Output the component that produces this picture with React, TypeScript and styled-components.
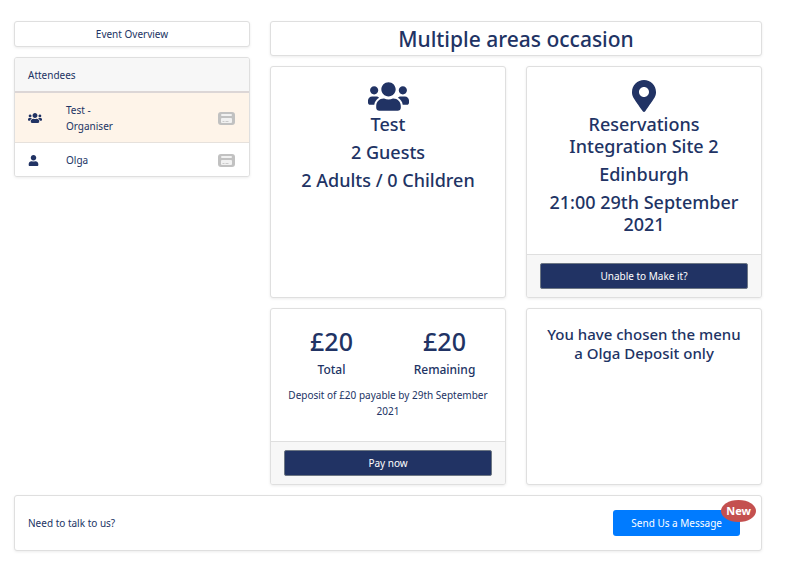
import React from 'react';
import styled, { createGlobalStyle, css } from 'styled-components';
import { FaMapMarkerAlt, FaUser, FaUsers } from 'react-icons/fa';

const navy = '#213364';
const line = '#dfdfdf';

const GlobalStyle = createGlobalStyle`
  *, *::before, *::after { box-sizing: border-box; }
  body {
    margin: 0;
    background: #fff;
    color: ${navy};
    font-family: "Noto Sans", "Open Sans", sans-serif;
    font-size: 10px;
    line-height: 16px;
  }
  h1, h2, h3, p { margin: 0; }
  button { font: inherit; cursor: pointer; }
`;

const Page = styled.main`
  display: flex;
  flex-direction: column;
  gap: 10px;
  padding: 21px 25px 21px 14px;
`;

const Columns = styled.div`
  display: grid;
  grid-template-columns: repeat(3, minmax(0, 1fr));
  column-gap: 20px;
`;

const Sidebar = styled.aside`
  display: flex;
  flex-direction: column;
  gap: 10px;
`;

const Content = styled.section`
  grid-column: span 2;
  display: grid;
  grid-template-columns: repeat(2, minmax(0, 1fr));
  gap: 10px 20px;
`;

const panel = css`
  background: #fff;
  border: 1px solid ${line};
  border-radius: 3px;
  box-shadow: 0 1px 3px rgba(0, 0, 0, 0.08);
`;

const OverviewButton = styled.button`
  ${panel}
  padding: 4px 14px;
  color: ${navy};
`;

const Attendees = styled.div`
  ${panel}
  overflow: hidden;
`;

const AttendeesHeader = styled.h2`
  padding: 9px 13px 8px;
  background: #f7f7f7;
  border-bottom: 2px solid #dcd6d6;
  font-size: 10px;
  font-weight: 400;
  line-height: 16px;
`;

const AttendeeRow = styled.div<{ $active?: boolean }>`
  display: grid;
  grid-template-columns: 38px 64px 1fr;
  align-items: center;
  padding: 9px 14px 8px 13px;
  background: ${(p) => (p.$active ? '#fef4e9' : '#fff')};
  & + & { border-top: 1px solid #e6e1dc; }
  svg { display: block; }
  > :last-child { justify-self: end; }
`;

const TitleBar = styled.header`
  ${panel}
  grid-column: 1 / -1;
  padding: 5px 14px 3px;
  text-align: center;
`;

const Title = styled.h1`
  font-size: 21px;
  font-weight: 500;
  line-height: 25px;
`;

const Card = styled.article`
  ${panel}
  display: flex;
  flex-direction: column;
  overflow: hidden;
  text-align: center;
`;

const CardBody = styled.div<{ $tall?: boolean }>`
  flex: 1;
  display: flex;
  flex-direction: column;
  align-items: center;
  padding: ${(p) => (p.$tall ? '13px 14px' : '16px 14px 22px')};
`;

const CardFooter = styled.footer`
  padding: 8px 13px;
  background: #f7f7f7;
  border-top: 1px solid ${line};
`;

const IconSlot = styled.div`
  display: flex;
  align-items: center;
  height: 32px;
  margin-bottom: 1px;
`;

const Heading = styled.h2`
  margin-bottom: 6px;
  font-size: 18px;
  font-weight: 500;
  line-height: 22px;
`;

const MenuHeading = styled.h2`
  padding: 0 4px;
  font-size: 15px;
  font-weight: 500;
  line-height: 19px;
`;

const Amounts = styled.div`
  align-self: stretch;
  display: grid;
  grid-template-columns: 1fr 1fr;
  column-gap: 20px;
  margin-bottom: 9px;
`;

const Amount = styled.p`
  font-size: 25px;
  font-weight: 500;
  line-height: 32px;
`;

const AmountLabel = styled.h3`
  padding-top: 5px;
  font-size: 12px;
  font-weight: 500;
  line-height: 16px;
`;

const PrimaryButton = styled.button`
  display: block;
  width: 100%;
  padding: 4px 14px;
  background: ${navy};
  border: 1px solid #6d7784;
  border-radius: 2px;
  color: #fff;
`;

const ContactBar = styled.section`
  ${panel}
  display: flex;
  align-items: center;
  justify-content: space-between;
  padding: 14px 21px 14px 13px;
`;

const MessageButton = styled.button`
  position: relative;
  padding: 5px 18px;
  background: #007bff;
  border: 0;
  border-radius: 3px;
  color: #fff;
`;

const Badge = styled.span`
  position: absolute;
  top: -10px;
  right: -16px;
  padding: 3px 5px;
  background: #c4504f;
  border-radius: 50%;
  font-size: 11px;
  font-weight: 700;
`;

const CardIcon = () => (
  <svg width="17" height="13" viewBox="0 0 17 13" role="img" aria-label="Payment card">
    <rect x="0" y="0" width="17" height="13" rx="3" fill="#c1c1c1" />
    <rect x="3" y="2" width="11" height="2" rx="1" fill="#f1f1f1" />
    <rect x="3" y="6" width="11" height="5" rx="1" fill="#f1f1f1" />
    <path d="M4.500 9.500h2M7.500 9.500h3" stroke="#cacaca" strokeWidth="1" />
  </svg>
);

const attendees = [
  { name: 'Test - Organiser', group: true },
  { name: 'Olga', group: false },
];

export default function App() {
  return (
    <>
      <GlobalStyle />
      <Page>
        <Columns>
          <Sidebar>
            <OverviewButton type="button">Event Overview</OverviewButton>
            <Attendees>
              <AttendeesHeader>Attendees</AttendeesHeader>
              {attendees.map(({ name, group }) => (
                <AttendeeRow key={name} $active={group}>
                  {group ? <FaUsers size={14} /> : <FaUser size={11} />}
                  <span>{name}</span>
                  <CardIcon />
                </AttendeeRow>
              ))}
            </Attendees>
          </Sidebar>
          <Content>
            <TitleBar>
              <Title>Multiple areas occasion</Title>
            </TitleBar>
            <Card>
              <CardBody $tall>
                <IconSlot><FaUsers size={41} /></IconSlot>
                <Heading>Test</Heading>
                <Heading>2 Guests</Heading>
                <Heading>2 Adults / 0 Children</Heading>
              </CardBody>
            </Card>
            <Card>
              <CardBody $tall>
                <IconSlot><FaMapMarkerAlt size={32} /></IconSlot>
                <Heading>Reservations Integration Site 2</Heading>
                <Heading>Edinburgh</Heading>
                <Heading>21:00 29th September 2021</Heading>
              </CardBody>
              <CardFooter>
                <PrimaryButton type="button">Unable to Make it?</PrimaryButton>
              </CardFooter>
            </Card>
            <Card>
              <CardBody>
                <Amounts>
                  <div>
                    <Amount>£20</Amount>
                    <AmountLabel>Total</AmountLabel>
                  </div>
                  <div>
                    <Amount>£20</Amount>
                    <AmountLabel>Remaining</AmountLabel>
                  </div>
                </Amounts>
                <p>Deposit of £20 payable by 29th September 2021</p>
              </CardBody>
              <CardFooter>
                <PrimaryButton type="button">Pay now</PrimaryButton>
              </CardFooter>
            </Card>
            <Card>
              <CardBody>
                <MenuHeading>You have chosen the menu a Olga Deposit only</MenuHeading>
              </CardBody>
            </Card>
          </Content>
        </Columns>
        <ContactBar>
          <p>Need to talk to us?</p>
          <MessageButton type="button">
            Send Us a Message
            <Badge>New</Badge>
          </MessageButton>
        </ContactBar>
      </Page>
    </>
  );
}
